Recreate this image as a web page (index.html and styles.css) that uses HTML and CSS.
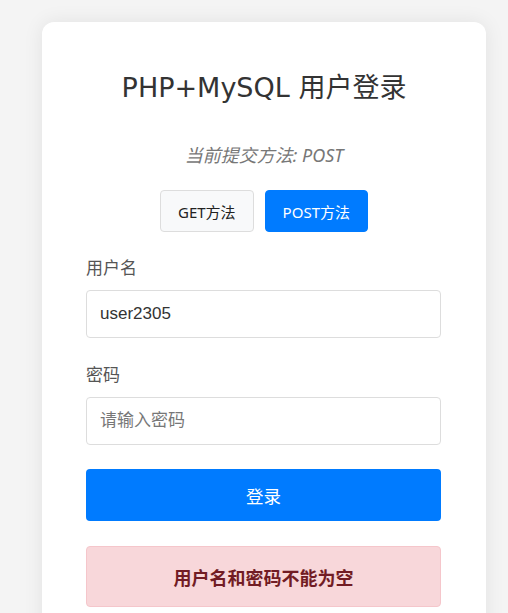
FILE: index.html
```html
<!DOCTYPE html>
<html lang="zh">
<head>
<meta charset="utf-8">
<title>PHP+MySQL 用户登录</title>
<link rel="stylesheet" href="styles.css">
</head>
<body>
<div class="card">
  <h1 class="title">PHP+MySQL 用户登录</h1>
  <p class="method">当前提交方法: POST</p>
  <div class="switch">
    <button class="btn btn-light">GET方法</button>
    <button class="btn btn-primary">POST方法</button>
  </div>
  <form class="form">
    <div class="field">
      <label class="label">用户名</label>
      <input class="input" type="text" value="user2305">
    </div>
    <div class="field">
      <label class="label">密码</label>
      <input class="input" type="password" placeholder="请输入密码">
    </div>
    <button class="submit" type="button">登录</button>
  </form>
  <div class="alert">用户名和密码不能为空</div>
</div>
</body>
</html>
```
FILE: styles.css
```css
html, body {
  margin: 0;
  padding: 0;
  background: #f4f4f4;
  height: 100%;
  overflow: hidden;
}
body {
  padding: 22px 22px 0 42px;
  font-family: "Noto Sans", "Noto Sans CJK SC", sans-serif;
  box-sizing: border-box;
}
.card {
  width: 444px;
  box-sizing: border-box;
  background: #fff;
  border-radius: 12px;
  box-shadow: 0 0 20px rgba(0,0,0,0.08);
  padding: 46px 44px 40px;
  min-height: 640px;
}
.title {
  margin: 0;
  text-align: center;
  font-family: "DejaVu Sans", "Noto Sans CJK SC", sans-serif;
  font-weight: normal;
  font-size: 27px;
  line-height: 40px;
  color: #333;
}
.method {
  margin: 35px 0 0;
  text-align: center;
  font-style: italic;
  color: #777;
  font-size: 18px;
  line-height: 24px;
}
.switch {
  display: flex;
  justify-content: center;
  gap: 11px;
  margin-top: 23px;
}
.btn {
  height: 42px;
  padding: 0 17px;
  border-radius: 4px;
  font-family: "Noto Sans", "Noto Sans CJK SC", sans-serif;
  font-size: 15px;
  cursor: pointer;
}
.btn-light {
  background: #f8f9fa;
  border: 1px solid #ddd;
  color: #222;
}
.btn-primary {
  background: #007bff;
  border: 1px solid #007bff;
  color: #fff;
}
.form {
  margin-top: 25px;
}
.field + .field {
  margin-top: 26px;
}
.label {
  display: block;
  font-size: 17px;
  line-height: 22px;
  color: #555;
  margin-bottom: 11px;
}
.input {
  display: block;
  width: 355px;
  height: 48px;
  box-sizing: border-box;
  border: 1px solid #ddd;
  border-radius: 4px;
  padding: 0 13px;
  font-family: "Liberation Sans", "Noto Sans CJK SC", sans-serif;
  font-size: 17px;
  color: #333;
}
.input::placeholder {
  font-family: "Noto Sans CJK SC", sans-serif;
  color: #777;
}
.submit {
  display: block;
  margin-top: 24px;
  width: 355px;
  height: 52px;
  border: none;
  border-radius: 4px;
  background: #007bff;
  color: #fff;
  font-family: "Noto Sans", "Noto Sans CJK SC", sans-serif;
  font-size: 17.5px;
  cursor: pointer;
}
.alert {
  margin-top: 25px;
  width: 355px;
  height: 61px;
  box-sizing: border-box;
  background: #f8d7da;
  border: 1px solid #f5c6cb;
  border-radius: 4px;
  color: #721c24;
  font-weight: bold;
  font-size: 18px;
  display: flex;
  align-items: center;
  justify-content: center;
}
```
